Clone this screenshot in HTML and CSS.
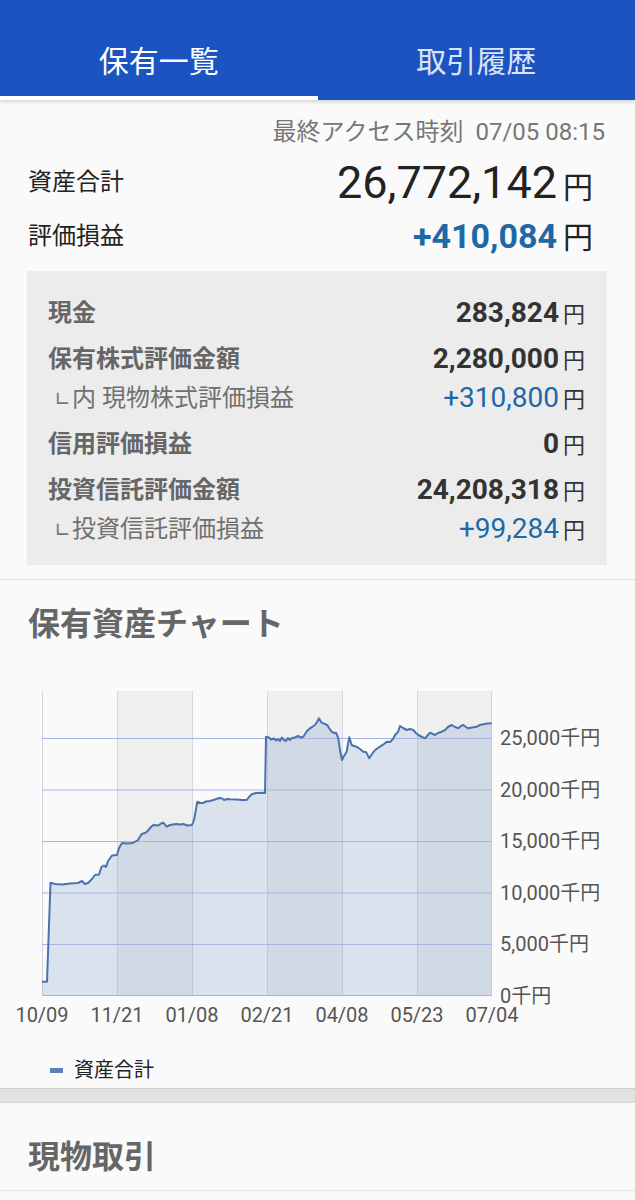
FILE: index.html
```html
<!DOCTYPE html>
<html lang="ja">
<head>
    <meta charset="UTF-8">
    <meta name="viewport" content="width=device-width, initial-scale=1.0">
    <title>保有一覧</title>
    <link rel="stylesheet" href="styles.css">
</head>
<body>
    <header class="tabs">
        <div class="tab active">保有一覧</div>
        <div class="tab">取引履歴</div>
    </header>

    <section class="summary">
        <div class="access">最終アクセス時刻<span class="access-time">07/05 08:15</span></div>

        <div class="total-row">
            <span class="total-label">資産合計</span>
            <span class="total-value"><span class="num">26,772,142</span><span class="yen">円</span></span>
        </div>
        <div class="total-row pl">
            <span class="total-label">評価損益</span>
            <span class="total-value"><span class="num">+410,084</span><span class="yen">円</span></span>
        </div>

        <div class="breakdown">
            <div class="item">
                <span class="item-label">現金</span>
                <span class="item-value"><span class="num">283,824</span><span class="yen">円</span></span>
            </div>
            <div class="item">
                <span class="item-label">保有株式評価金額</span>
                <span class="item-value"><span class="num">2,280,000</span><span class="yen">円</span></span>
            </div>
            <div class="item sub">
                <span class="item-label"><span class="mark">∟</span>内 現物株式評価損益</span>
                <span class="item-value"><span class="num">+310,800</span><span class="yen">円</span></span>
            </div>
            <div class="item">
                <span class="item-label">信用評価損益</span>
                <span class="item-value"><span class="num">0</span><span class="yen">円</span></span>
            </div>
            <div class="item">
                <span class="item-label">投資信託評価金額</span>
                <span class="item-value"><span class="num">24,208,318</span><span class="yen">円</span></span>
            </div>
            <div class="item sub">
                <span class="item-label"><span class="mark">∟</span>投資信託評価損益</span>
                <span class="item-value"><span class="num">+99,284</span><span class="yen">円</span></span>
            </div>
        </div>
    </section>

    <section class="chart-section">
        <h2 class="section-title">保有資産チャート</h2>

        <!-- 期間ごとの帯・目盛り線・推移 -->
        <svg class="chart" width="635" height="370" viewBox="0 0 635 370">
            <rect class="band" x="117" y="31" width="75" height="305"/>
            <rect class="band" x="267" y="31" width="75" height="305"/>
            <rect class="band" x="417" y="31" width="75" height="305"/>

            <g class="vgrid">
                <line x1="42.5" y1="31" x2="42.5" y2="336"/>
                <line x1="117.5" y1="31" x2="117.5" y2="336"/>
                <line x1="192.5" y1="31" x2="192.5" y2="336"/>
                <line x1="267.5" y1="31" x2="267.5" y2="336"/>
                <line x1="342.5" y1="31" x2="342.5" y2="336"/>
                <line x1="417.5" y1="31" x2="417.5" y2="336"/>
                <line x1="491.5" y1="31" x2="491.5" y2="336"/>
            </g>

            <path class="area" d="M42,321.7 L47,321.7 L50.5,222.7 L55,224 L62,224.5 L70,223.5 L78,223 L82,221 L85,224 L88,223 L92,219 L95,215 L99,214.5 L101.5,207 L104,205.5 L106,207 L108,201 L112,195.5 L117,195 L119,188 L122,183 L127,183.5 L133,183 L138,180 L141.7,174 L145,173 L147,171.7 L151,167 L153.3,165 L158.3,165.5 L161,163.5 L163.3,162.7 L166.7,166.7 L170,165 L176,164 L180,164.5 L183.3,164 L187,165.5 L192,165 L194,160 L197.3,141.7 L200,143 L203,143 L206,141.5 L210,141 L215,139.5 L219,138 L221.7,138.3 L224,140 L227,139 L230,139.3 L236,139.5 L242,140 L246.7,140 L249,137 L251.7,134.3 L256,133 L263.3,132.7 L265,133 L266,76.7 L269,77.5 L271,79.5 L274,78.5 L276,80.5 L278,79 L280,81 L282,77.5 L284,80 L286,81 L288,78 L290,80 L292,78 L295,77.5 L298,76 L301,77.5 L303.3,76.7 L307,71 L310,68.3 L315,65 L317,62 L319,58.3 L321,62 L323.3,63.3 L327.3,65 L329,68 L331.7,71.7 L334,73 L336,72.7 L338.3,78.3 L340,90 L342,100 L344,96 L346.7,91.7 L348,84 L349.3,77.3 L351.7,85 L354,86 L356.7,86.7 L360,89 L363.3,91.7 L366,92 L369.3,98.3 L372,94 L375,90 L378,88 L380,86.7 L384,84 L386.7,81.7 L390,82 L393,79 L395,75 L398,72 L400,66 L403,68 L406.7,70 L410,69 L413.3,70 L416,73 L418.3,75 L422,77 L425,78.3 L428,75 L430,72.7 L433,74 L435,75 L438,73 L441.7,71.7 L445,70 L448,67 L451.7,65 L455,67 L458.3,68.3 L461,66 L463.3,65 L466,67 L468.3,68.3 L472,67.5 L476.7,66.7 L480,65 L483.3,64.3 L487,63.5 L491.7,63.3 L491.7,336 L42,336 Z"/>

            <g class="hgrid">
                <line x1="42" y1="78.5" x2="492" y2="78.5"/>
                <line x1="42" y1="130" x2="492" y2="130"/>
                <line x1="42" y1="181.5" x2="492" y2="181.5"/>
                <line x1="42" y1="233" x2="492" y2="233"/>
                <line x1="42" y1="284.5" x2="492" y2="284.5"/>
            </g>
            <line class="axis" x1="42" y1="335.5" x2="492" y2="335.5"/>

            <path class="trend" d="M42,321.7 L47,321.7 L50.5,222.7 L55,224 L62,224.5 L70,223.5 L78,223 L82,221 L85,224 L88,223 L92,219 L95,215 L99,214.5 L101.5,207 L104,205.5 L106,207 L108,201 L112,195.5 L117,195 L119,188 L122,183 L127,183.5 L133,183 L138,180 L141.7,174 L145,173 L147,171.7 L151,167 L153.3,165 L158.3,165.5 L161,163.5 L163.3,162.7 L166.7,166.7 L170,165 L176,164 L180,164.5 L183.3,164 L187,165.5 L192,165 L194,160 L197.3,141.7 L200,143 L203,143 L206,141.5 L210,141 L215,139.5 L219,138 L221.7,138.3 L224,140 L227,139 L230,139.3 L236,139.5 L242,140 L246.7,140 L249,137 L251.7,134.3 L256,133 L263.3,132.7 L265,133 L266,76.7 L269,77.5 L271,79.5 L274,78.5 L276,80.5 L278,79 L280,81 L282,77.5 L284,80 L286,81 L288,78 L290,80 L292,78 L295,77.5 L298,76 L301,77.5 L303.3,76.7 L307,71 L310,68.3 L315,65 L317,62 L319,58.3 L321,62 L323.3,63.3 L327.3,65 L329,68 L331.7,71.7 L334,73 L336,72.7 L338.3,78.3 L340,90 L342,100 L344,96 L346.7,91.7 L348,84 L349.3,77.3 L351.7,85 L354,86 L356.7,86.7 L360,89 L363.3,91.7 L366,92 L369.3,98.3 L372,94 L375,90 L378,88 L380,86.7 L384,84 L386.7,81.7 L390,82 L393,79 L395,75 L398,72 L400,66 L403,68 L406.7,70 L410,69 L413.3,70 L416,73 L418.3,75 L422,77 L425,78.3 L428,75 L430,72.7 L433,74 L435,75 L438,73 L441.7,71.7 L445,70 L448,67 L451.7,65 L455,67 L458.3,68.3 L461,66 L463.3,65 L466,67 L468.3,68.3 L472,67.5 L476.7,66.7 L480,65 L483.3,64.3 L487,63.5 L491.7,63.3"/>

            <g class="y-label">
                <text x="500" y="80">25,000千円</text>
                <text x="500" y="131.5">20,000千円</text>
                <text x="500" y="183">15,000千円</text>
                <text x="500" y="234.5">10,000千円</text>
                <text x="500" y="286">5,000千円</text>
                <text x="500" y="337.5">0千円</text>
            </g>
            <g class="x-label">
                <text x="42" y="357">10/09</text>
                <text x="117" y="357">11/21</text>
                <text x="192" y="357">01/08</text>
                <text x="267" y="357">02/21</text>
                <text x="342" y="357">04/08</text>
                <text x="417" y="357">05/23</text>
                <text x="492" y="357">07/04</text>
            </g>
        </svg>

        <div class="legend"><span class="legend-mark"></span>資産合計</div>
    </section>

    <div class="divider"></div>

    <section class="trade-section">
        <h2 class="section-title">現物取引</h2>
    </section>
</body>
</html>
```

FILE: styles.css
```css
body {
    margin: 0;
    background-color: #fafafa;
    color: #222;
    font-family: Roboto, "Noto Sans CJK JP", sans-serif;
}

.tabs {
    display: flex;
    height: 100px;
    background-color: #1b54c1;
    box-shadow: 0 2px 4px rgba(0, 0, 0, 0.15);
    position: relative;
}

.tab {
    flex: 1;
    display: flex;
    align-items: flex-end;
    justify-content: center;
    box-sizing: border-box;
    padding-bottom: 16px;
    border-bottom: 4px solid transparent;
    font-size: 30px;
    line-height: 36px;
    color: rgba(255, 255, 255, 0.86);
}

.tab.active {
    color: #fff;
    border-bottom-color: #fff;
}

.summary {
    padding: 17px 28px 14px;
    border-bottom: 1px solid #dcdcdc;
}

.access {
    text-align: right;
    padding-right: 2px;
    font-size: 24px;
    line-height: 30px;
    color: #777;
}

.access-time {
    margin-left: 12px;
}

.total-row {
    display: flex;
    justify-content: space-between;
    align-items: center;
    height: 70px;
}

.total-row.pl {
    height: 38px;
}

.total-label {
    font-size: 24px;
    line-height: 1;
    color: #222;
}

.total-value {
    display: flex;
    align-items: baseline;
    padding-right: 14px;
    line-height: 1;
}

.total-value .num {
    font-size: 45px;
    color: #222;
}

.total-row.pl .num {
    font-size: 34px;
    font-weight: 700;
    color: #1f68a6;
}

.total-value .yen {
    margin-left: 6px;
    font-size: 30px;
    color: #222;
}

.breakdown {
    margin: 16px 0 0 -1px;
    padding: 24px 22px 18px 21px;
    background-color: #ececec;
}

.item {
    display: flex;
    justify-content: space-between;
    align-items: center;
    height: 36px;
    margin-top: 10px;
}

.item:first-child {
    margin-top: 0;
}

.item.sub {
    margin-top: 3px;
}

.item-label {
    font-size: 24px;
    line-height: 1;
    font-weight: 700;
    color: #666;
}

.item.sub .item-label {
    font-weight: 400;
    color: #707070;
}

.mark {
    display: inline-block;
    width: 18px;
    margin-left: 6px;
    font-size: 20px;
    font-family: "DejaVu Sans", sans-serif;
    color: #777;
}

.item-value {
    display: flex;
    align-items: baseline;
    line-height: 1;
}

.item-value .num {
    font-size: 28px;
    font-weight: 700;
    color: #333;
}

.item.sub .num {
    font-weight: 400;
    color: #1f68a6;
}

.item-value .yen {
    margin-left: 4px;
    font-size: 22px;
    color: #333;
}

.section-title {
    margin: 0;
    padding-left: 28px;
    font-size: 32px;
    line-height: 40px;
    font-weight: 700;
    color: #666;
}

.chart-section {
    padding-top: 24px;
    padding-bottom: 6px;
}

.chart {
    display: block;
    margin-top: 16px;
    font-family: Roboto, "Noto Sans CJK JP", sans-serif;
}

.band {
    fill: #efefef;
}

.vgrid line {
    stroke: #d4d7e2;
    stroke-width: 1;
}

.hgrid line {
    stroke: #a9b4e6;
    stroke-width: 1;
}

.axis {
    stroke: #aab2cc;
    stroke-width: 1;
}

.area {
    fill: #5b81b9;
    fill-opacity: 0.2;
}

.trend {
    fill: none;
    stroke: #4a73ad;
    stroke-width: 2;
    stroke-linejoin: round;
}

.y-label text {
    font-size: 20px;
    fill: #555;
    dominant-baseline: middle;
}

.x-label text {
    font-size: 20px;
    fill: #555;
    text-anchor: middle;
    dominant-baseline: middle;
}

.legend {
    display: flex;
    align-items: center;
    margin-top: 28px;
    padding-left: 50px;
    font-size: 20px;
    line-height: 24px;
    color: #222;
}

.legend-mark {
    width: 13px;
    height: 5px;
    margin-right: 11px;
    background-color: #5b82b8;
}

.divider {
    height: 13px;
    background-color: #e2e2e2;
    border-top: 1px solid #cfcfcf;
    border-bottom: 1px solid #d6d6d6;
}

.trade-section {
    padding: 34px 0 13px;
    border-bottom: 1px solid #e6e6e6;
    box-shadow: 0 1px 2px rgba(0, 0, 0, 0.05);
}
```
